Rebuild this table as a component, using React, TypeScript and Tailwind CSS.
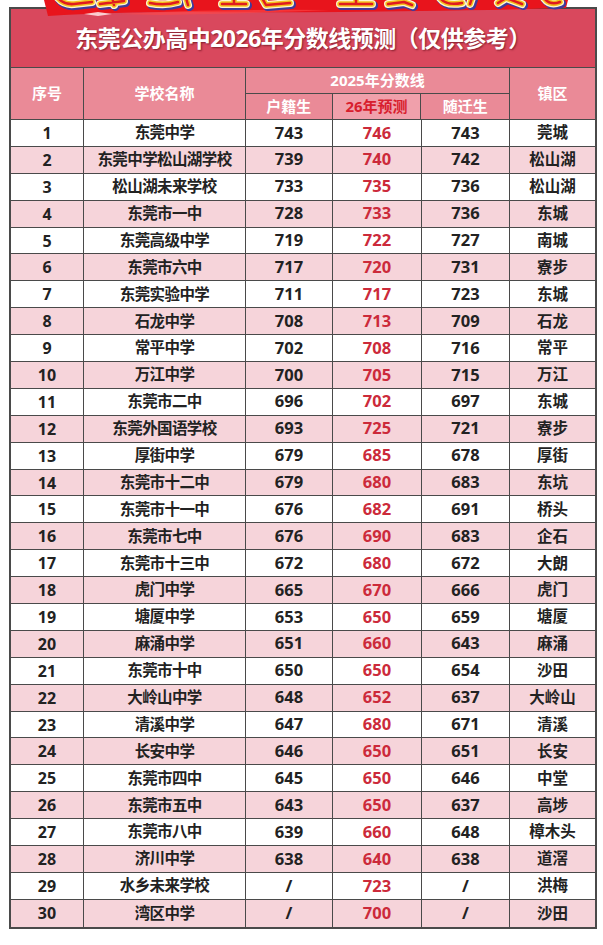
import React from 'react'

type Row = [number, string, string, string, string, string]

const rows: Row[] = [
  [1, '东莞中学', '743', '746', '743', '莞城'],
  [2, '东莞中学松山湖学校', '739', '740', '742', '松山湖'],
  [3, '松山湖未来学校', '733', '735', '736', '松山湖'],
  [4, '东莞市一中', '728', '733', '736', '东城'],
  [5, '东莞高级中学', '719', '722', '727', '南城'],
  [6, '东莞市六中', '717', '720', '731', '寮步'],
  [7, '东莞实验中学', '711', '717', '723', '东城'],
  [8, '石龙中学', '708', '713', '709', '石龙'],
  [9, '常平中学', '702', '708', '716', '常平'],
  [10, '万江中学', '700', '705', '715', '万江'],
  [11, '东莞市二中', '696', '702', '697', '东城'],
  [12, '东莞外国语学校', '693', '725', '721', '寮步'],
  [13, '厚街中学', '679', '685', '678', '厚街'],
  [14, '东莞市十二中', '679', '680', '683', '东坑'],
  [15, '东莞市十一中', '676', '682', '691', '桥头'],
  [16, '东莞市七中', '676', '690', '683', '企石'],
  [17, '东莞市十三中', '672', '680', '672', '大朗'],
  [18, '虎门中学', '665', '670', '666', '虎门'],
  [19, '塘厦中学', '653', '650', '659', '塘厦'],
  [20, '麻涌中学', '651', '660', '643', '麻涌'],
  [21, '东莞市十中', '650', '650', '654', '沙田'],
  [22, '大岭山中学', '648', '652', '637', '大岭山'],
  [23, '清溪中学', '647', '680', '671', '清溪'],
  [24, '长安中学', '646', '650', '651', '长安'],
  [25, '东莞市四中', '645', '650', '646', '中堂'],
  [26, '东莞市五中', '643', '650', '637', '高埗'],
  [27, '东莞市八中', '639', '660', '648', '樟木头'],
  [28, '济川中学', '638', '640', '638', '道滘'],
  [29, '水乡未来学校', '/', '723', '/', '洪梅'],
  [30, '湾区中学', '/', '700', '/', '沙田'],
]

// bottoms of the big banner characters, cut off by the page edge
const strokes = [
  'M58 -2 Q64 5 74 4 L92 2',
  'M100 4 L124 1 M112 -3 L114 5',
  'M150 3 Q165 6 178 2 M186 -2 L188 5',
  'M222 4 L246 4 M234 -3 L234 4',
  'M262 -2 L266 5 L290 3',
  'M340 4 L372 4 M356 -3 L356 4',
  'M388 4 L404 2 L412 5',
  'M440 -2 Q446 6 462 3 M472 -2 L470 4',
  'M498 3 L506 -2 L522 4',
  'M544 -2 Q550 6 560 2',
]

const Ribbon = () => (
  <svg className="absolute left-0 top-0" width="603" height="24" viewBox="0 0 603 24">
    <path d="M44 0 H568 L566 8 Q500 10 420 11 Q300 13 190 12 Q110 12 48 16 Z" fill="#e8141c" />
    <path d="M120 14 Q200 9 330 10 Q260 13 160 15 Z" fill="#ff4a4a" opacity="0.6" />
    <path d="M84 14 L98 12 L112 14 L98 16 Z" fill="#ffe6e6" opacity="0.85" />
    {strokes.map((d, i) => (
      <g key={i} fill="none" strokeLinecap="round" strokeLinejoin="round">
        <path d={d} stroke="#3f3a9c" strokeWidth="9" transform="translate(1.5 1.5)" />
        <path d={d} stroke="#fff5d0" strokeWidth="8" />
        <path d={d} stroke="#f4c21e" strokeWidth="5.5" />
        <path d={d} stroke="#e01b1f" strokeWidth="2.5" />
      </g>
    ))}
  </svg>
)

const cell = 'flex items-center justify-center border-r border-[#4a4a4a]'

export default function App() {
  return (
    <div className="relative w-[603px] h-[945px] overflow-hidden bg-white [font-family:'Noto_Sans','Noto_Sans_CJK_SC',sans-serif]">
      <div className="pt-[7px] pl-[9px]">
        <div className="w-[588px] border-2 border-[#4a4a4a]">
          {/* title */}
          <div className="h-[59px] bg-[#d9485d] flex items-center justify-center border-b border-[#4a4a4a]">
            <span className="text-white font-bold text-[23px] tracking-[-0.5px] [text-shadow:1px_1px_2px_rgba(90,10,20,0.7)]">
              东莞公办高中2026年分数线预测（仅供参考）
            </span>
          </div>

          {/* header */}
          <div className="flex h-[52px] bg-[#ea8a97] text-white font-bold text-[15px] border-b border-[#4a4a4a]">
            <div className={`${cell} w-[73px]`}>序号</div>
            <div className={`${cell} w-[162px]`}>学校名称</div>
            <div className="w-[264px] flex flex-col border-r border-[#4a4a4a]">
              <div className="h-[26px] flex items-center justify-center border-b border-[#4a4a4a]">2025年分数线</div>
              <div className="flex flex-1">
                <div className={`${cell} w-[87px]`}>户籍生</div>
                <div className={`${cell} w-[89px] bg-[#f0a0ab] text-[#d81e2e]`}>26年预测</div>
                <div className="w-[88px] flex items-center justify-center">随迁生</div>
              </div>
            </div>
            <div className="flex-1 flex items-center justify-center">镇区</div>
          </div>

          {/* body */}
          {rows.map((r, i) => (
            <div
              key={r[0]}
              className={`flex h-[26.9px] font-bold text-[#222] ${i < rows.length - 1 ? 'border-b border-[#4a4a4a]' : ''} ${i % 2 === 1 ? 'bg-[#f6d4da]' : 'bg-white'}`}
            >
              <div className={`${cell} w-[73px] text-[16px]`}>{r[0]}</div>
              <div className={`${cell} w-[162px] text-[15.5px] tracking-[-0.6px]`}>{r[1]}</div>
              <div className={`${cell} w-[87px] text-[16.5px]`}>{r[2]}</div>
              <div className={`${cell} w-[89px] text-[16.5px] text-[#cc2a3a]`}>{r[3]}</div>
              <div className={`${cell} w-[88px] text-[16.5px]`}>{r[4]}</div>
              <div className="flex-1 flex items-center justify-center text-[15.5px]">{r[5]}</div>
            </div>
          ))}
        </div>
      </div>
      <Ribbon />
    </div>
  )
}
